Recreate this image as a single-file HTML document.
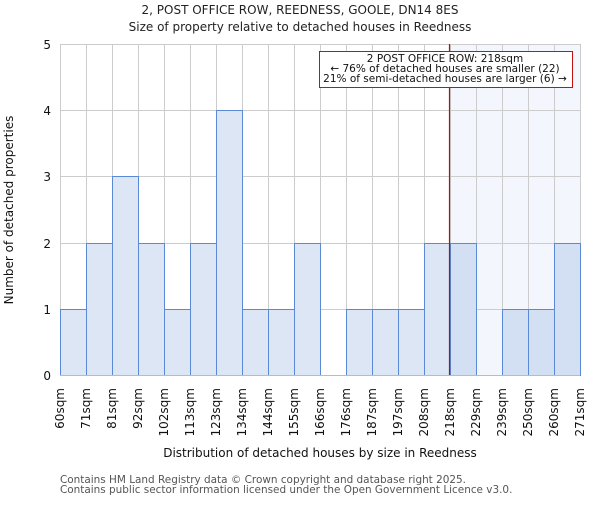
<!DOCTYPE html>
<html><head><meta charset="utf-8"><style>
body{margin:0;background:#fff;}
text{font-family:"DejaVu Sans","Liberation Sans",sans-serif;}
</style></head><body>
<svg width="600" height="500" xmlns="http://www.w3.org/2000/svg">
<rect width="600" height="500" fill="#fff"/>
<text x="300" y="14" font-size="12" text-anchor="middle" fill="#222">2, POST OFFICE ROW, REEDNESS, GOOLE, DN14 8ES</text>
<text x="300" y="31" font-size="12" text-anchor="middle" fill="#222">Size of property relative to detached houses in Reedness</text>
<rect x="450" y="44" width="130" height="331" fill="#f3f6fd"/>
<g stroke="#cccccc" stroke-width="1">
<line x1="60" y1="44.5" x2="580" y2="44.5"/>
<line x1="60" y1="110.5" x2="580" y2="110.5"/>
<line x1="60" y1="176.5" x2="580" y2="176.5"/>
<line x1="60" y1="243.5" x2="580" y2="243.5"/>
<line x1="60" y1="309.5" x2="580" y2="309.5"/>
<line x1="60.5" y1="44" x2="60.5" y2="375"/><line x1="86.5" y1="44" x2="86.5" y2="375"/><line x1="112.5" y1="44" x2="112.5" y2="375"/><line x1="138.5" y1="44" x2="138.5" y2="375"/><line x1="164.5" y1="44" x2="164.5" y2="375"/><line x1="190.5" y1="44" x2="190.5" y2="375"/><line x1="216.5" y1="44" x2="216.5" y2="375"/><line x1="242.5" y1="44" x2="242.5" y2="375"/><line x1="268.5" y1="44" x2="268.5" y2="375"/><line x1="294.5" y1="44" x2="294.5" y2="375"/><line x1="320.5" y1="44" x2="320.5" y2="375"/><line x1="346.5" y1="44" x2="346.5" y2="375"/><line x1="372.5" y1="44" x2="372.5" y2="375"/><line x1="398.5" y1="44" x2="398.5" y2="375"/><line x1="424.5" y1="44" x2="424.5" y2="375"/><line x1="450.5" y1="44" x2="450.5" y2="375"/><line x1="476.5" y1="44" x2="476.5" y2="375"/><line x1="502.5" y1="44" x2="502.5" y2="375"/><line x1="528.5" y1="44" x2="528.5" y2="375"/><line x1="554.5" y1="44" x2="554.5" y2="375"/><line x1="580.5" y1="44" x2="580.5" y2="375"/>
</g>
<g stroke="#5a8ad6" stroke-width="1" fill="#dce6f4">
<rect x="60.5" y="309.5" width="26" height="66"/>
<rect x="86.5" y="243.5" width="26" height="132"/>
<rect x="112.5" y="176.5" width="26" height="199"/>
<rect x="138.5" y="243.5" width="26" height="132"/>
<rect x="164.5" y="309.5" width="26" height="66"/>
<rect x="190.5" y="243.5" width="26" height="132"/>
<rect x="216.5" y="110.5" width="26" height="265"/>
<rect x="242.5" y="309.5" width="26" height="66"/>
<rect x="268.5" y="309.5" width="26" height="66"/>
<rect x="294.5" y="243.5" width="26" height="132"/>
<rect x="346.5" y="309.5" width="26" height="66"/>
<rect x="372.5" y="309.5" width="26" height="66"/>
<rect x="398.5" y="309.5" width="26" height="66"/>
<rect x="424.5" y="243.5" width="26" height="132"/>
</g>
<g stroke="#5a8ad6" stroke-width="1" fill="#d3dff2">
<rect x="450.5" y="243.5" width="26" height="132"/>
<rect x="502.5" y="309.5" width="26" height="66"/>
<rect x="528.5" y="309.5" width="26" height="66"/>
<rect x="554.5" y="243.5" width="26" height="132"/>
</g>
<line x1="60" y1="375.5" x2="580" y2="375.5" stroke="#bbbbbb" stroke-width="1"/>
<line x1="449.5" y1="44" x2="449.5" y2="375" stroke="#b01010" stroke-width="1.2"/>
<rect x="319.5" y="51.5" width="253" height="36" fill="#fff" stroke="#c81010" stroke-width="1"/>
<g font-size="10.5" text-anchor="middle" fill="#111">
<text x="445" y="62">2 POST OFFICE ROW: 218sqm</text>
<text x="445" y="72">← 76% of detached houses are smaller (22)</text>
<text x="445" y="82">21% of semi-detached houses are larger (6) →</text>
</g>
<g font-size="12" text-anchor="end" fill="#111">
<text x="51" y="49">5</text><text x="51" y="115">4</text><text x="51" y="181">3</text><text x="51" y="248">2</text><text x="51" y="314">1</text><text x="51" y="380">0</text>
</g>
<text transform="translate(13,210) rotate(-90)" font-size="12" text-anchor="middle" fill="#111">Number of detached properties</text>
<g font-size="12" text-anchor="end" fill="#111">
<text transform="translate(64,388) rotate(-90)">60sqm</text>
<text transform="translate(90,388) rotate(-90)">71sqm</text>
<text transform="translate(116,388) rotate(-90)">81sqm</text>
<text transform="translate(142,388) rotate(-90)">92sqm</text>
<text transform="translate(168,388) rotate(-90)">102sqm</text>
<text transform="translate(194,388) rotate(-90)">113sqm</text>
<text transform="translate(220,388) rotate(-90)">123sqm</text>
<text transform="translate(246,388) rotate(-90)">134sqm</text>
<text transform="translate(272,388) rotate(-90)">144sqm</text>
<text transform="translate(298,388) rotate(-90)">155sqm</text>
<text transform="translate(324,388) rotate(-90)">166sqm</text>
<text transform="translate(350,388) rotate(-90)">176sqm</text>
<text transform="translate(376,388) rotate(-90)">187sqm</text>
<text transform="translate(402,388) rotate(-90)">197sqm</text>
<text transform="translate(428,388) rotate(-90)">208sqm</text>
<text transform="translate(454,388) rotate(-90)">218sqm</text>
<text transform="translate(480,388) rotate(-90)">229sqm</text>
<text transform="translate(506,388) rotate(-90)">239sqm</text>
<text transform="translate(532,388) rotate(-90)">250sqm</text>
<text transform="translate(558,388) rotate(-90)">260sqm</text>
<text transform="translate(584,388) rotate(-90)">271sqm</text>
</g>
<text x="320" y="457" font-size="12" text-anchor="middle" fill="#111">Distribution of detached houses by size in Reedness</text>
<g font-size="10.45" fill="#555">
<text x="60" y="483">Contains HM Land Registry data © Crown copyright and database right 2025.</text>
<text x="60" y="493">Contains public sector information licensed under the Open Government Licence v3.0.</text>
</g>
</svg>
</body></html>
